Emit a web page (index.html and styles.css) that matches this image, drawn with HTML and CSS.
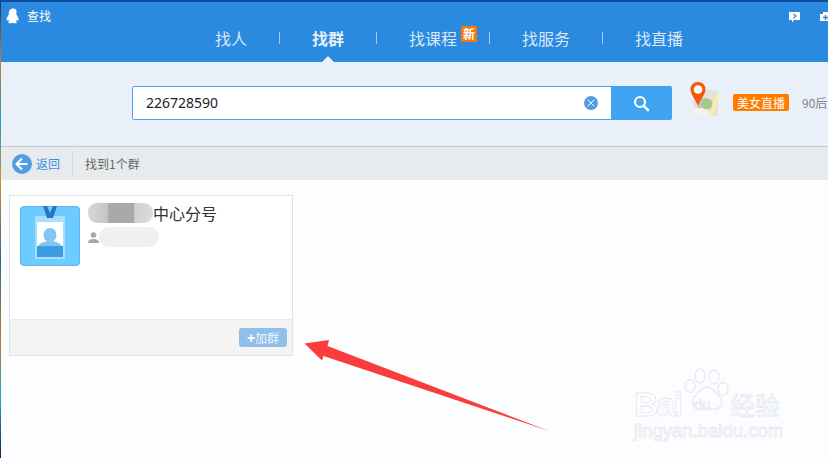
FILE: index.html
```html
<!DOCTYPE html>
<html lang="zh">
<head>
<meta charset="utf-8">
<title>查找</title>
<link rel="stylesheet" href="styles.css">
</head>
<body>
<div class="desktop">
  <div class="window">
    <header class="head">
      <div class="title">
        <svg class="qq" viewBox="0 0 16 17"><path d="M8 0C4.600 0 3.200 2.600 3.200 5.400c0 1-.2 1.600-.7 2.600C1.300 9.600.3 12 .8 13.500c.5.800 1.200-.2 1.700-1 .2 1 .7 1.800 1.300 2.400-1 .4-1.600.9-1.300 1.400.4.700 3 .7 4.500.2.300 0 .7 0 1 0 1.500.5 4.100.5 4.500-.2.300-.5-.3-1-1.300-1.400.6-.6 1.100-1.400 1.300-2.400.5.800 1.200 1.800 1.700 1 .5-1.500-.5-3.900-1.700-5.500-.5-1-.7-1.600-.7-2.600C12.800 2.600 11.400 0 8 0z" fill="#fff"/></svg>
        <span>查找</span>
      </div>
      <div class="tools">
        <svg class="tool" viewBox="0 0 11 11"><path d="M0 0h11v8H5L3 10.500V8H0z" fill="#fff"/><path d="M4.500 2l2.500 2-2.500 2" fill="none" stroke="#2a8ae0" stroke-width="1.200"/></svg>
        <svg class="tool" viewBox="0 0 11 11"><path d="M3 2V0h5v2h3v7H0V2z" fill="#fff"/><path d="M5.500 3v5M3 5.500h5" stroke="#2a8ae0" stroke-width="1.400"/></svg>
      </div>
      <nav class="nav">
        <a class="tab">找人</a><i class="sep"></i>
        <a class="tab on">找群</a><i class="sep"></i>
        <a class="tab">找课程<b class="new">新</b></a><i class="sep"></i>
        <a class="tab">找服务</a><i class="sep"></i>
        <a class="tab">找直播</a>
      </nav>
    </header>

    <section class="band">
      <div class="search">
        <div class="field">
          <span class="query">226728590</span>
          <svg class="clear" viewBox="0 0 14 14"><circle cx="7" cy="7" r="7" fill="#4f9de3"/><path d="M3.800 3.800l6.400 6.400M10.200 3.800l-6.400 6.400" stroke="#fff" stroke-width="1"/></svg>
        </div>
        <div class="go">
          <svg class="lens" viewBox="0 0 17 17"><circle cx="7" cy="7" r="5" fill="none" stroke="#fff" stroke-width="2.200"/><path d="M10.800 10.800l5 5" stroke="#fff" stroke-width="2.400"/></svg>
        </div>
      </div>
      <svg class="map" viewBox="0 0 30 36">
        <rect x="3" y="8" width="25" height="26" rx="2.500" fill="#e4e3da"/>
        <rect x="3" y="26" width="16" height="8" fill="#f4f2ea"/>
        <rect x="8" y="16" width="10" height="10" fill="#c4c6bf"/>
        <circle cx="17" cy="22" r="5.500" fill="#a7c88d"/>
        <path d="M19 34l8-23 1 1v7l-5 15z" fill="#f7ee9e"/>
        <path d="M8 0C3.500 0 .5 3.300.5 7.300.5 12 5 17 8 24c3-7 7.500-12 7.500-16.700C15.500 3.300 12.500 0 8 0z" fill="#f2590c"/>
        <circle cx="8" cy="7.500" r="4.300" fill="#fff"/>
      </svg>
      <span class="live">美女直播</span>
      <span class="after90">90后</span>
    </section>

    <div class="bar">
      <svg class="back" viewBox="0 0 20 20"><circle cx="10" cy="10" r="10" fill="#4f9de3"/><path d="M10 4.500L4.500 10l5.500 5.500M5 10h10.500" fill="none" stroke="#fff" stroke-width="2"/></svg>
      <a class="backlabel">返回</a>
      <i class="barsep"></i>
      <span class="found">找到1个群</span>
    </div>

    <main class="results">
      <article class="card">
        <div class="card-body">
          <svg class="avatar" viewBox="0 0 60 60">
            <rect x=".5" y=".5" width="59" height="59" rx="3" fill="#6ccbff" stroke="#5fb8ea"/>
            <rect x="15" y="10" width="30" height="43" fill="#a6e0ff"/>
            <rect x="17" y="16" width="26" height="35" fill="#fff"/>
            <ellipse cx="30" cy="29" rx="6.500" ry="7" fill="#82c7f3"/>
            <path d="M18 41c0-3 5-5 9-6v-2h6v2c4 1 9 3 9 6z" fill="#82c7f3"/>
            <rect x="17" y="40" width="26" height="11" fill="#3d9ce2"/>
            <path d="M23 0l4 12h6l4-12h-4l-3 7-3-7z" fill="#2a76c0"/>
          </svg>
          <div class="meta">
            <div class="name"><span class="blur blur-name"></span><span>中心分号</span></div>
            <div class="count">
              <svg class="person" viewBox="0 0 11 11"><circle cx="5.500" cy="3" r="2.800" fill="#a5a8ab"/><path d="M0 11c0-3 2.500-4 5.500-4s5.500 1 5.500 4z" fill="#a5a8ab"/></svg>
              <span class="blur blur-count"></span>
            </div>
          </div>
        </div>
        <div class="card-foot">
          <a class="join"><b class="plus">+</b>加群</a>
        </div>
      </article>
    </main>
  </div>
</div>

<svg class="arrow" viewBox="0 0 270 120"><path d="M14.500 23.500L39 20l-1.500 6L259 111 33.500 36 32 40.500z" fill="#fb3c3c"/></svg>

<div class="mark">
  <svg class="paw" viewBox="0 0 46 46" fill="none" stroke="#e6e9ee" stroke-width="1.300">
    <ellipse cx="16" cy="8" rx="5" ry="7"/>
    <ellipse cx="30" cy="9" rx="5" ry="7"/>
    <ellipse cx="6" cy="18" rx="5" ry="6.500"/>
    <ellipse cx="39" cy="21" rx="5" ry="6.500"/>
    <path d="M23 19c-6 0-8 5-12 9-4 4-3 13 5 13 3 0 5-1 7-1s5 2 9 1c7-1 7-9 3-13-4-3-6-9-12-9z"/>
  </svg>
  <span class="m-bai">Bai</span><span class="m-du">du</span><span class="m-cn">经验</span>
  <span class="m-url">jingyan.baidu.com</span>
</div>
</body>
</html>
```
FILE: styles.css
```css
* { box-sizing: border-box; }
html, body { margin: 0; padding: 0; width: 828px; height: 458px; overflow: hidden; }
body { font-family: "Noto Sans CJK SC", "Noto Sans", sans-serif; position: relative; background: #fcfdff; }

.desktop {
  height: 458px;
  padding: 2px 0 0 1px;
  background: linear-gradient(180deg, #0a4fa0 0, #0a4fa0 2px, #123a70 2px, #c08030 60px, #20a0c0 120px, #d09030 180px, #2a6a90 260px, #b08030 340px, #20a8c0 400px, #102040 458px);
}
.window { width: 827px; height: 456px; display: flex; flex-direction: column; background: #fcfdff; }

.head { height: 60px; flex: none; background: #2a8ae0; color: #fff; display: grid; grid-template-columns: 1fr auto; grid-template-rows: 22px 38px; }
.title { display: flex; align-items: center; gap: 7px; padding: 6px 0 0 5px; font-size: 12px; line-height: 16px; }
.qq { width: 14px; height: 16px; display: block; }
.tools { display: flex; gap: 20px; padding: 10px 0 0 0; margin-right: -3px; }
.tool { width: 11px; height: 11px; display: block; }

.nav { grid-column: 1 / 3; display: flex; align-items: flex-start; padding: 2px 0 0 214px; font-size: 16px; line-height: 24px; }
.tab { display: block; position: relative; color: #dbe8f5; white-space: nowrap; }
.on { font-weight: 700; color: #e6eef8; }
.on::after { content: ""; position: absolute; left: 10px; bottom: -12px; border: 6px solid transparent; border-top-width: 0; border-bottom-color: #e9f0f9; }
.sep { display: block; width: 1px; height: 12px; margin: 6px 32px 0; background: #a9cdee; flex: none; }
.new { position: absolute; left: 52px; top: 0; width: 16px; height: 16px; background: #f5780f; color: #fff; font-size: 12px; line-height: 15px; text-align: center; font-weight: 700; }

.band { height: 85px; flex: none; background: #e9f0f9; display: flex; align-items: flex-start; padding: 24px 0 0 131px; border-bottom: 1px solid #c4c9cc; }
.search { display: flex; width: 540px; height: 34px; flex: none; border-radius: 2px; overflow: hidden; }
.field { flex: 1; display: flex; align-items: center; justify-content: space-between; background: #fff; border: 1px solid #3fa3f2; border-right: 0; border-radius: 2px 0 0 2px; padding: 0 13px 0 13px; }
.query { font-family: "Noto Sans", sans-serif; font-size: 14px; line-height: 18px; margin-top: -1px; color: #222; }
.clear { width: 14px; height: 14px; display: block; }
.go { width: 61px; background: #3fa3f2; display: flex; align-items: center; justify-content: center; }
.lens { width: 17px; height: 17px; display: block; }
.map { width: 30px; height: 36px; flex: none; margin: -4px 0 0 18px; display: block; }
.live { margin: 8px 0 0 13px; width: 56px; height: 17px; flex: none; background: #ff7c00; color: #fff; border-radius: 2px; font-size: 12px; line-height: 17px; text-align: center; white-space: nowrap; }
.after90 { margin: 8px 0 0 13px; font-size: 12px; line-height: 17px; color: #7f8488; white-space: nowrap; }

.bar { height: 33px; flex: none; background: #e8ebed; display: flex; align-items: center; padding-left: 11px; }
.back { width: 20px; height: 20px; display: block; }
.backlabel { margin-left: 4px; font-size: 12px; color: #3a8ee0; }
.barsep { width: 1px; height: 26px; background: #d2d6d9; margin-left: 12px; }
.found { margin-left: 12px; font-size: 12px; color: #666; }

.results { flex: 1; padding: 15px 0 0 8px; }
.card { width: 284px; height: 161px; border: 1px solid #e0e2e5; background: #fff; display: flex; flex-direction: column; }
.card-body { flex: 1; display: flex; padding: 10px 0 0 10px; }
.avatar { width: 60px; height: 60px; display: block; flex: none; }
.meta { margin-left: 8px; }
.name { display: flex; align-items: center; height: 20px; margin-top: -3px; font-size: 16px; color: #333; white-space: nowrap; }
.blur { display: block; border-radius: 9px; }
.blur-name { width: 65px; height: 20px; background: linear-gradient(90deg, #d8d8d8 0, #c4c4c4 30%, #a9a9a9 32%, #a9a9a9 70%, #d0d0d0 72%, #dcdcdc 100%); }
.count { display: flex; align-items: center; height: 20px; margin-top: 4px; }
.person { width: 11px; height: 11px; display: block; flex: none; }
.blur-count { width: 60px; height: 20px; background: #f0f0f0; border-radius: 10px; }
.card-foot { height: 36px; flex: none; background: #f4f4f4; border-top: 1px solid #ebebeb; display: flex; justify-content: flex-end; align-items: flex-start; padding: 8px 5px 0 0; }
.join { width: 48px; height: 19px; background: #8fc0e9; color: #eef5fb; border-radius: 3px; font-size: 12px; line-height: 19px; text-align: center; white-space: nowrap; }
.plus { color: #fff; font-weight: 700; font-family: "Liberation Sans", sans-serif; font-size: 14px; }

.arrow { position: absolute; left: 290px; top: 320px; width: 270px; height: 120px; display: block; }

.mark { position: absolute; left: 630px; top: 330px; width: 198px; height: 128px; font-family: "Liberation Sans", sans-serif; color: #fcfdff; -webkit-text-stroke: 0.8px #e6e9ee; }
.paw { position: absolute; left: 54px; top: 38px; width: 46px; height: 46px; display: block; }
.m-bai, .m-du, .m-cn, .m-url { position: absolute; white-space: nowrap; }
.m-bai { left: 4px; top: 54px; font-size: 34px; line-height: 40px; font-weight: 700; letter-spacing: -2px; }
.m-du { left: 64px; top: 66px; font-size: 15px; line-height: 18px; }
.m-cn { left: 100px; top: 59px; font-size: 25px; line-height: 30px; font-family: "Noto Sans CJK SC", sans-serif; }
.m-url { left: 4px; top: 90px; font-size: 18.500px; line-height: 22px; }
```
